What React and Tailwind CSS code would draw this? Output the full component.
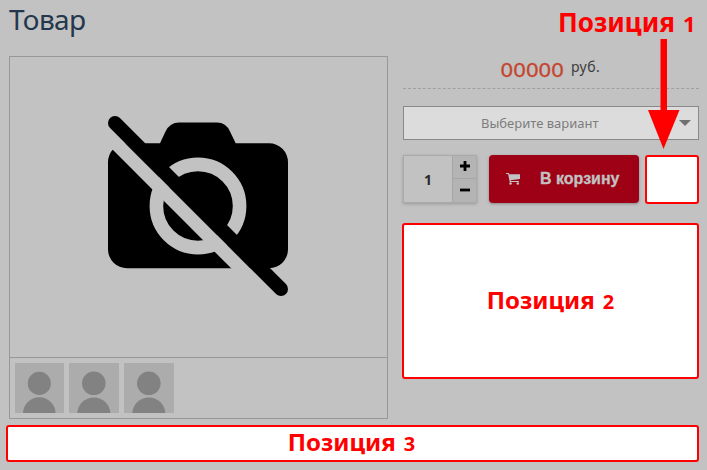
import React from "react";

function CameraOff() {
  return (
    <svg width="180" height="181" viewBox="108 116 180 181" className="block">
      <path
        d="M127 143.3H160L165.5 131.5Q170 122.5 179 122.5H217Q226 122.5 230 131.5L235.7 143.3H269A19 19 0 0 1 288 162.3V249.3A19 19 0 0 1 269 268.3H127A19 19 0 0 1 108 249.3V162.3A19 19 0 0 1 127 143.3Z"
        fill="#000"
      />
      <circle cx="198" cy="206" r="41.6" fill="none" stroke="#c2c2c2" strokeWidth="13.6" />
      <path d="M100 127.5L285 312.5" stroke="#c2c2c2" strokeWidth="13.6" />
      <path d="M115 123L281 289" stroke="#000" strokeWidth="14" strokeLinecap="round" />
    </svg>
  );
}

function Thumb({ className }) {
  return (
    <div className={`h-[50px] overflow-hidden bg-[#acacac] ${className}`}>
      <svg width="100%" height="50" viewBox="0 0 50 50" className="block">
        <circle cx="24.8" cy="20.3" r="11.8" fill="#828282" />
        <circle cx="24.8" cy="51" r="16.6" fill="#828282" />
      </svg>
    </div>
  );
}

function Cart() {
  return (
    <svg width="14" height="12" viewBox="0 0 14 12" fill="#c2c2c2" className="block">
      <path d="M0 0H2.800L3.300 1.200H14V6L4.500 7.200L4.700 8H13V9H3.700L2.100 1H0Z" />
      <circle cx="4.500" cy="10.500" r="1.250" />
      <circle cx="11.800" cy="10.500" r="1.250" />
    </svg>
  );
}

function Position({ number, className, digitClassName }) {
  return (
    <div className={`flex items-baseline leading-[34px] font-bold text-[#f00] ${className}`}>
      <span>Позиция</span>
      <span className={digitClassName}>{number}</span>
    </div>
  );
}

export default function App() {
  return (
    <div className="relative h-[470px] w-[707px] overflow-hidden bg-[#c2c2c2] font-['Noto_Sans','Open_Sans',sans-serif]">
      <div className="flex h-[425px]">
        <main className="ml-[9px] w-[379px]">
          <h1 className="h-[56px] text-[28px] leading-[38px] tracking-[-0.6px] text-[#24384d]">Товар</h1>
          <div className="h-[363px] border border-[#989898]">
            <div className="flex h-[301px] border-b border-[#989898] pt-[59px] pl-[98px]">
              <CameraOff />
            </div>
            <div className="flex gap-[5px] pt-[5px] pl-[5px]">
              <Thumb className="w-[49px]" />
              <Thumb className="w-[50px]" />
              <Thumb className="w-[50px]" />
            </div>
          </div>
        </main>

        <aside className="ml-[14px] w-[298px]">
          <div className="ml-px flex h-[89px] w-[296px] border-b border-dashed border-[#a0a0a0] pt-[50px] pl-[98px]">
            <span className="mt-[4px] h-[30px] w-[70px] font-['Lato'] text-[20px] leading-[30px] tracking-[1.1px] text-[#c5452f] [-webkit-text-stroke:0.4px_#c5452f]">00000</span>
            <span className="mt-[5px] text-[14px] leading-[24px] tracking-[0.5px] text-[#3c3c3c]">руб.</span>
          </div>
          <div className="mt-[17px] ml-px flex h-[34px] w-[296px] items-center border border-[#898989] bg-[#dcdcdc]">
            <span className="mt-[2px] ml-[77px] w-[119px] text-[13px] whitespace-nowrap text-[#7c7c7c]">Выберите вариант</span>
            <svg width="12" height="6" viewBox="0 0 12 6" className="ml-[79px]">
              <path d="M0 0H12L6 6Z" fill="#707070" />
            </svg>
          </div>
          <div className="mt-[15px] flex h-[49px]">
            <div className="ml-px flex h-[48px] w-[74px] border border-[#aaa] shadow-[0_1px_3px_#999]">
              <div className="flex-1 pt-[10px] text-center text-[14px] leading-[27px] font-bold text-[#292929]">1</div>
              <div className="flex w-[24px] flex-col border-l border-[#a6a6a6] bg-[#b4b4b4]">
                <div className="flex h-[23px] items-center justify-center border-b border-[#a6a6a6]">
                  <svg width="12" height="12" viewBox="0 0 12 12" className="-mt-[2px]">
                    <path d="M1 6H11M6 1V11" stroke="#000" strokeWidth="2.800" />
                  </svg>
                </div>
                <div className="flex h-[23px] items-center justify-center">
                  <svg width="12" height="12" viewBox="0 0 12 12" className="-mt-[2px]">
                    <path d="M1 6H11" stroke="#000" strokeWidth="2.800" />
                  </svg>
                </div>
              </div>
            </div>
            <button className="ml-[12px] flex h-[48px] w-[150px] items-center rounded-[4px] bg-[#9e0016] pl-[17px] text-[#c2c2c2] shadow-[0_1px_3px_#888]">
              <Cart />
              <span className="ml-[20px] font-['Liberation_Sans'] text-[16px] font-bold whitespace-nowrap [-webkit-text-stroke:0.3px_#c2c2c2]">В корзину</span>
            </button>
            <div className="ml-[6px] h-[49px] w-[54px] rounded-[3px] border-2 border-[#f00] bg-white" />
          </div>
          <div className="mt-[19px] flex h-[156px] w-[297px] items-center justify-center rounded-[3px] border-2 border-[#f00] bg-white">
            <Position number="2" className="text-[24px]" digitClassName="ml-[8px] text-[20px]" />
          </div>
        </aside>
      </div>

      <div className="ml-[6px] flex h-[37px] w-[693px] items-center justify-center rounded-[3px] border-2 border-[#f00] bg-white pr-[2px] pb-[1px]">
        <Position number="3" className="text-[24px]" digitClassName="ml-[8px] text-[20px]" />
      </div>

      <div className="absolute top-[5px] left-[558px]">
        <Position number="1" className="text-[26px]" digitClassName="ml-[8px] text-[22px]" />
      </div>
      <svg width="34" height="112" viewBox="0 0 34 112" className="absolute top-[39px] left-[647px]">
        <path d="M13.500 0H20V71H32.500L16.500 110L1 71H13.500Z" fill="#f00" />
      </svg>
    </div>
  );
}
